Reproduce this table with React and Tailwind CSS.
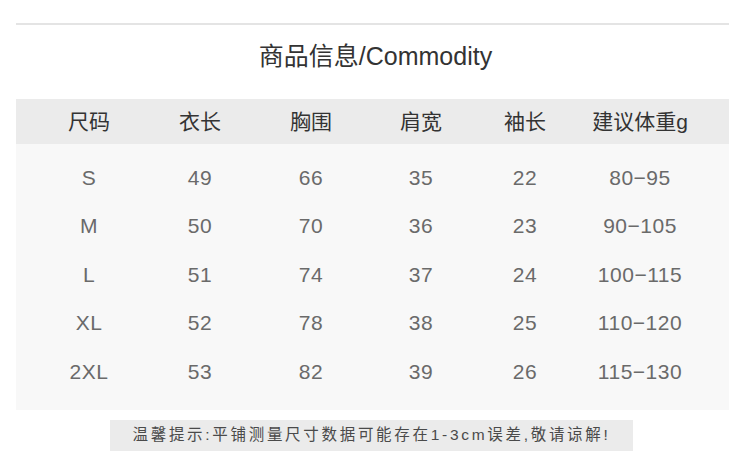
const headers = ["尺码", "衣长", "胸围", "肩宽", "袖长", "建议体重g"]

const rows = [
  ["S", "49", "66", "35", "22", "80−95"],
  ["M", "50", "70", "36", "23", "90−105"],
  ["L", "51", "74", "37", "24", "100−115"],
  ["XL", "52", "78", "38", "25", "110−120"],
  ["2XL", "53", "82", "39", "26", "115−130"],
]

const cols = "grid grid-cols-[110px_112px_110px_110px_98px_132px] pl-[18px]"

export default function App() {
  return (
    <div
      className="w-[750px] h-[467px] bg-white relative overflow-hidden"
      style={{ fontFamily: '"Liberation Sans", "Noto Sans CJK SC", sans-serif' }}
    >
      <div className="pt-[23px] px-[16px] w-[745px]">
        <div className="h-[2px] bg-[#e4e4e4]" />

        <h1 className="text-center text-[25px] leading-none text-[#333] mt-[19px] pl-[6px]">
          商品信息/Commodity
        </h1>

        <div className="mt-[30px]">
          <div className={`${cols} h-[45px] items-center bg-[#ebebeb] text-[21px] text-[#333]`}>
            {headers.map((h) => (
              <div key={h} className="text-center">{h}</div>
            ))}
          </div>

          <div className="bg-[#f8f8f8] pt-[9px] pb-[14px]">
            {rows.map((r) => (
              <div key={r[0]} className={`${cols} h-[48.5px] items-center text-[21px] tracking-[0.5px] text-[#6a6a6a]`}>
                {r.map((v, i) => (
                  <div key={i} className="text-center">{v}</div>
                ))}
              </div>
            ))}
          </div>
        </div>
      </div>

      <div className="mt-[10px] ml-[110px] w-[523px] h-[31px] bg-[#ebebeb] flex items-center justify-center text-[15.5px] tracking-[2.7px] text-[#4a4a4a]">
        温馨提示:平铺测量尺寸数据可能存在1-3cm误差,敬请谅解!
      </div>
    </div>
  )
}
